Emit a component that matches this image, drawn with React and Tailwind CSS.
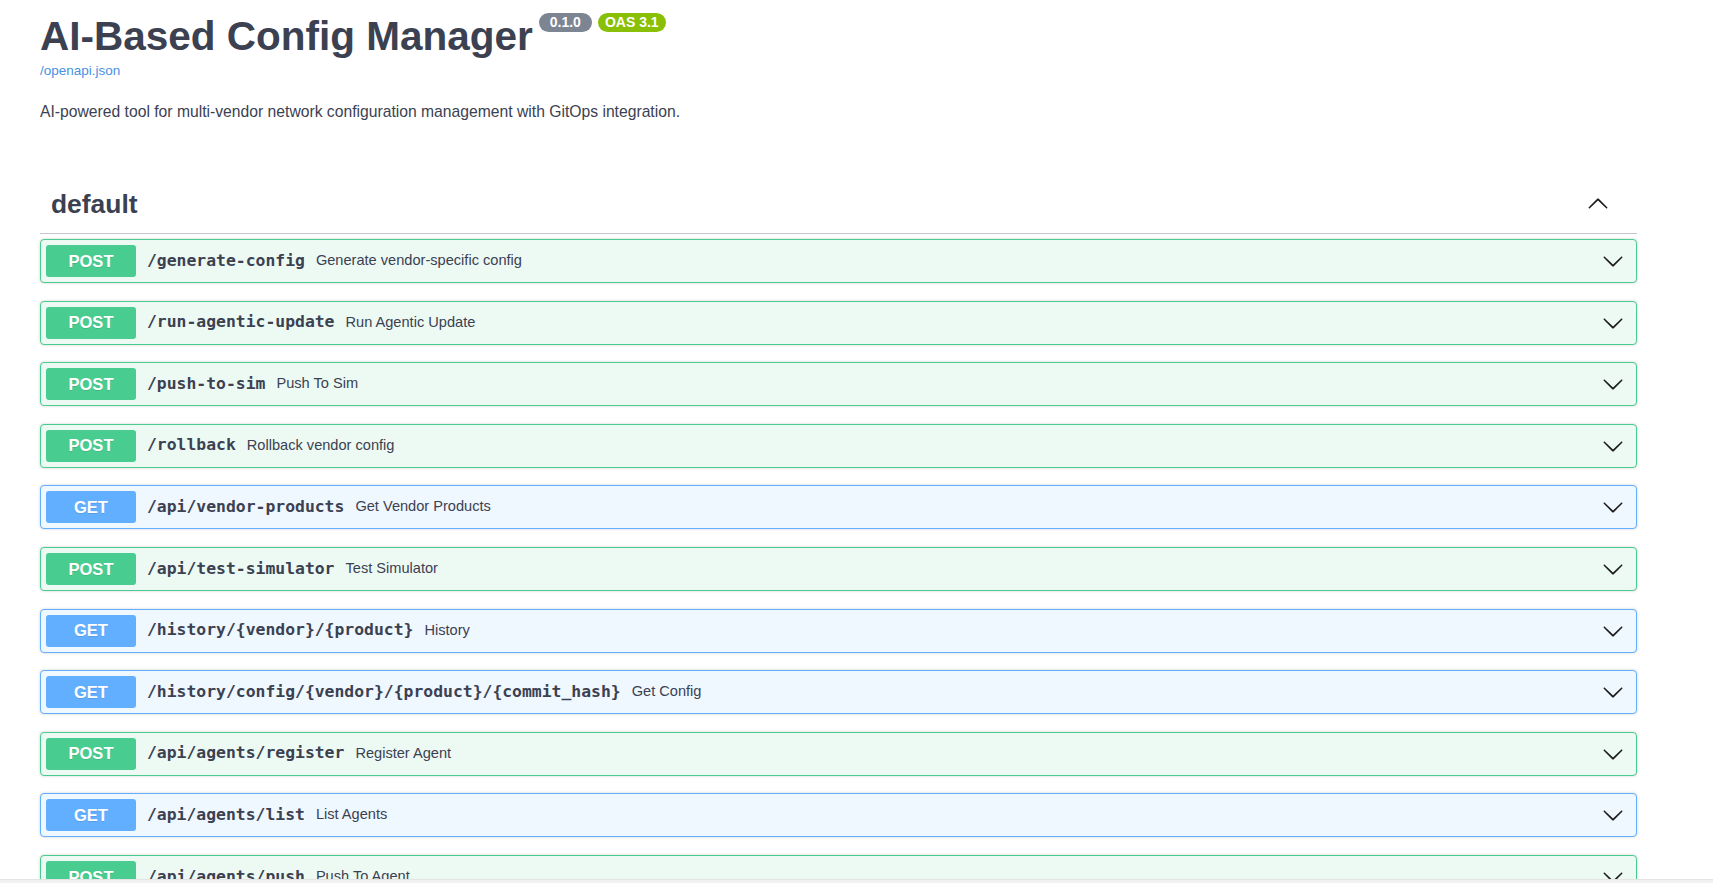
const endpoints = [
  { method: 'POST', path: '/generate-config', summary: 'Generate vendor-specific config' },
  { method: 'POST', path: '/run-agentic-update', summary: 'Run Agentic Update' },
  { method: 'POST', path: '/push-to-sim', summary: 'Push To Sim' },
  { method: 'POST', path: '/rollback', summary: 'Rollback vendor config' },
  { method: 'GET', path: '/api/vendor-products', summary: 'Get Vendor Products' },
  { method: 'POST', path: '/api/test-simulator', summary: 'Test Simulator' },
  { method: 'GET', path: '/history/{vendor}/{product}', summary: 'History' },
  { method: 'GET', path: '/history/config/{vendor}/{product}/{commit_hash}', summary: 'Get Config' },
  { method: 'POST', path: '/api/agents/register', summary: 'Register Agent' },
  { method: 'GET', path: '/api/agents/list', summary: 'List Agents' },
  { method: 'POST', path: '/api/agents/push', summary: 'Push To Agent' },
  { method: 'GET', path: '/api/agents/status', summary: 'Agent Status' },
];

function Arrow({ up = false, className = '' }) {
  return (
    <svg
      viewBox="0 0 20 20"
      className={'w-[22px] h-[22px] fill-[#1b1b1b] ' + (up ? 'rotate-180 ' : '') + className}
    >
      <path d="M17.418 6.109c.272-.268.709-.268.979 0s.271.701 0 .969l-7.908 7.83c-.27.268-.707.268-.979 0l-7.908-7.83c-.27-.268-.27-.701 0-.969.271-.268.709-.268.979 0L10 13.25l7.418-7.141z" />
    </svg>
  );
}

function Operation({ method, path, summary }) {
  const isGet = method === 'GET';
  return (
    <div
      className={
        isGet
          ? 'mb-[17.6px] rounded-[4px] border border-[#61affe] bg-[#eff7ff] shadow-[0_0_3px_rgba(0,0,0,0.19)]'
          : 'mb-[17.6px] rounded-[4px] border border-[#49cc90] bg-[#edfaf4] shadow-[0_0_3px_rgba(0,0,0,0.19)]'
      }
    >
      <div className="flex items-center py-[5px] pl-[5px] pr-[12px]">
        <span
          className={
            (isGet ? 'bg-[#61affe]' : 'bg-[#49cc90]') +
            ' flex h-[32px] w-[90px] shrink-0 items-center justify-center rounded-[3px] text-[16.5px] font-bold text-white [text-shadow:0_1px_0_rgba(0,0,0,0.1)]'
          }
        >
          {method}
        </span>
        <span className="px-[11px] font-['DejaVu_Sans_Mono',monospace] text-[16.4px] font-bold text-[#3b4151]">
          {path}
        </span>
        <span className="flex-1 text-[14.6px] text-[#3b4151]">{summary}</span>
        <Arrow />
      </div>
    </div>
  );
}

export default function App() {
  return (
    <div className="min-h-screen bg-white font-['Liberation_Sans',Arial,sans-serif] text-[#3b4151]">
      <div className="pl-[40px] pr-[76px]">
        {/* Info */}
        <div className="flex items-start pt-[13px]">
          <h2 className="text-[40.5px] font-bold leading-[46px] text-[#3b4151]">AI-Based Config Manager</h2>
          <span className="ml-[6px] flex h-[19px] w-[53px] items-center justify-center rounded-full bg-[#7d8492] text-[14px] font-bold text-white">
            0.1.0
          </span>
          <span className="ml-[6px] flex h-[19px] w-[68px] items-center justify-center rounded-full bg-[#89bf04] text-[14px] font-bold text-white">
            OAS 3.1
          </span>
        </div>
        <a className="mt-[4px] block text-[13.5px] leading-[16px] text-[#4990e2]">/openapi.json</a>
        <p className="mt-[24px] text-[15.7px] leading-[18px] text-[#3b4151]">
          AI-powered tool for multi-vendor network configuration management with GitOps integration.
        </p>

        {/* Tag section */}
        <div className="mt-[53px] flex items-center border-b border-[rgba(59,65,81,0.3)] pb-[11px] pl-[11px] pr-[28px] pt-[12px]">
          <h3 className="flex-1 text-[26.4px] font-bold leading-[36px] text-[#3b4151]">default</h3>
          <Arrow up />
        </div>
        <div className="pt-[5px]">
          {endpoints.map((op) => (
            <Operation key={op.path} {...op} />
          ))}
        </div>
      </div>
      <div className="fixed bottom-0 left-0 right-0 h-[4px] border-t border-[#e4e4e4] bg-[#f1f1f1]" />
    </div>
  );
}
